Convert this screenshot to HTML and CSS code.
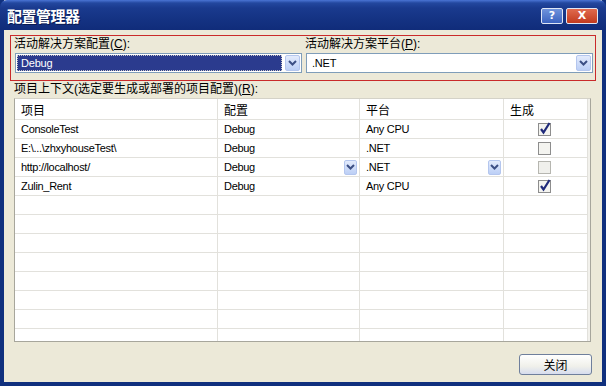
FILE: index.html
```html
<!DOCTYPE html>
<html lang="zh-CN">
<head>
    <meta charset="UTF-8">
    <title>配置管理器</title>
    <link rel="stylesheet" href="styles.css">
</head>
<body>
<div class="window">
    <div class="titlebar">
        <span class="title">配置管理器</span>
        <div class="tb-btns">
            <span class="tb-btn tb-help">?</span>
            <span class="tb-btn tb-close">X</span>
        </div>
    </div>

    <div class="client">
        <div class="active-box">
            <div class="field">
                <label>活动解决方案配置(<u>C</u>):</label>
                <div class="combo">
                    <span class="combo-text selected">Debug</span>
                    <span class="drop"><svg width="9" height="6" viewBox="0 0 9 6"><path d="M1 1 L4.5 4.5 L8 1" fill="none" stroke="#3c4f84" stroke-width="2"/></svg></span>
                </div>
            </div>
            <div class="field">
                <label>活动解决方案平台(<u>P</u>):</label>
                <div class="combo">
                    <span class="combo-text">.NET</span>
                    <span class="drop"><svg width="9" height="6" viewBox="0 0 9 6"><path d="M1 1 L4.5 4.5 L8 1" fill="none" stroke="#3c4f84" stroke-width="2"/></svg></span>
                </div>
            </div>
        </div>

        <div class="ctx-label">项目上下文(选定要生成或部署的项目配置)(<u>R</u>):</div>

        <div class="grid">
            <div class="row head">
                <div class="cell">项目</div>
                <div class="cell">配置</div>
                <div class="cell">平台</div>
                <div class="cell">生成</div>
            </div>
            <div class="row">
                <div class="cell">ConsoleTest</div>
                <div class="cell">Debug</div>
                <div class="cell">Any CPU</div>
                <div class="cell chk-cell"><svg width="14" height="15" viewBox="0 0 14 15"><rect x="0.5" y="1.5" width="12" height="12" fill="#f4f4f0" stroke="#8d8d8d"/><path d="M3 7 L5.5 10.5 L11.5 1" fill="none" stroke="#1f2a7a" stroke-width="2.2"/></svg></div>
            </div>
            <div class="row">
                <div class="cell">E:\...\zhxyhouseTest\</div>
                <div class="cell">Debug</div>
                <div class="cell">.NET</div>
                <div class="cell chk-cell"><svg width="14" height="15" viewBox="0 0 14 15"><rect x="0.5" y="1.5" width="12" height="12" fill="#f4f4f0" stroke="#8d8d8d"/></svg></div>
            </div>
            <div class="row">
                <div class="cell">http://localhost/</div>
                <div class="cell cell-combo">Debug<span class="mini-drop"><svg width="9" height="6" viewBox="0 0 9 6"><path d="M1 1 L4.5 4.5 L8 1" fill="none" stroke="#3c4f84" stroke-width="2"/></svg></span></div>
                <div class="cell cell-combo">.NET<span class="mini-drop"><svg width="9" height="6" viewBox="0 0 9 6"><path d="M1 1 L4.5 4.5 L8 1" fill="none" stroke="#3c4f84" stroke-width="2"/></svg></span></div>
                <div class="cell chk-cell"><svg width="14" height="15" viewBox="0 0 14 15"><rect x="0.5" y="1.5" width="12" height="12" fill="#f0f0ec" stroke="#b6b6b0"/></svg></div>
            </div>
            <div class="row">
                <div class="cell">Zulin_Rent</div>
                <div class="cell">Debug</div>
                <div class="cell">Any CPU</div>
                <div class="cell chk-cell"><svg width="14" height="15" viewBox="0 0 14 15"><rect x="0.5" y="1.5" width="12" height="12" fill="#f4f4f0" stroke="#8d8d8d"/><path d="M3 7 L5.5 10.5 L11.5 1" fill="none" stroke="#1f2a7a" stroke-width="2.2"/></svg></div>
            </div>
            <div class="row"><div class="cell"></div><div class="cell"></div><div class="cell"></div><div class="cell"></div></div>
            <div class="row"><div class="cell"></div><div class="cell"></div><div class="cell"></div><div class="cell"></div></div>
            <div class="row"><div class="cell"></div><div class="cell"></div><div class="cell"></div><div class="cell"></div></div>
            <div class="row"><div class="cell"></div><div class="cell"></div><div class="cell"></div><div class="cell"></div></div>
            <div class="row"><div class="cell"></div><div class="cell"></div><div class="cell"></div><div class="cell"></div></div>
            <div class="row"><div class="cell"></div><div class="cell"></div><div class="cell"></div><div class="cell"></div></div>
            <div class="row"><div class="cell"></div><div class="cell"></div><div class="cell"></div><div class="cell"></div></div>
            <div class="row"><div class="cell"></div><div class="cell"></div><div class="cell"></div><div class="cell"></div></div>
        </div>

        <div class="footer">
            <button class="btn">关闭</button>
        </div>
    </div>
</div>
</body>
</html>
```

FILE: styles.css
```css
body { margin: 0; background: #0f2a78; font-family: "Liberation Sans", "Noto Sans CJK SC", sans-serif; font-size: 12px; color: #000; }
.window { width: 606px; height: 386px; box-sizing: border-box; background: #ece9d8; border: 4px solid #10307e; border-top: none; display: flex; flex-direction: column; }

/* title bar */
.titlebar { height: 30px; margin: 0 -4px; padding: 0 8px 0 7px; display: flex; align-items: center; justify-content: space-between; border-radius: 7px 7px 0 0; background: linear-gradient(#4a74d4 0, #23479f 3px, #1a3a8e 8px, #143282 20px, #102c7a 30px); }
.title { color: #fff; font-family: "Noto Sans CJK SC", sans-serif; font-weight: bold; font-size: 15px; letter-spacing: -0.5px; text-shadow: 1px 1px 0 #0a1a50; }
.tb-btns { display: flex; gap: 3px; margin-top: 2px; }
.tb-btn { height: 14px; line-height: 14px; border: 1px solid #dfe6f5; border-radius: 2px; color: #fff; font-weight: bold; font-size: 11px; text-align: center; font-family: "DejaVu Sans", sans-serif; }
.tb-help { width: 20px; background: linear-gradient(#6f93dc, #3b63c0); }
.tb-close { width: 30px; background: linear-gradient(#e06a4e, #c23a1e); }

.client { flex: 1; padding: 5px 6px 0 6px; display: flex; flex-direction: column; }

/* active config box */
.active-box { border: 1px solid #c92a2a; height: 46px; box-sizing: border-box; padding: 1px 2px 0 4px; display: grid; grid-template-columns: 287px 287px; column-gap: 4px; }
.field label { display: block; height: 14px; line-height: 14px; margin: 0 0 2px -1px; }
.combo { height: 20px; box-sizing: border-box; border: 1px solid #7f9db9; background: #fff; display: flex; align-items: center; padding: 0 1px 0 1px; }
.combo-text { flex: 1; height: 16px; line-height: 16px; padding-left: 4px; font-size: 11px; letter-spacing: -0.2px; }
.combo-text.selected { background: #2b3b8e; color: #fff; outline: 1px dotted #c8c8c8; outline-offset: -1px; margin-right: 3px; }
.drop { width: 15px; height: 16px; box-sizing: border-box; border: 1px solid #b4c6ee; border-radius: 2px; background: linear-gradient(#e3ebfc, #bccff6); display: flex; align-items: center; justify-content: center; }

.ctx-label { height: 14px; line-height: 14px; margin: 1px 0 2px 4px; }

/* project grid */
.grid { margin-left: 4px; width: 577px; height: 244px; box-sizing: border-box; border: 1px solid #a7a69c; border-top-color: #d4d2c8; background: #f2f1ec; overflow: hidden; }
.row { display: grid; grid-template-columns: 203px 142px 144px 84px; height: 19px; }
.row.head { height: 21px; }
.cell { background: #fff; border-right: 1px solid #e2e1dc; border-bottom: 1px solid #e2e1dc; box-sizing: border-box; padding-left: 6px; display: flex; align-items: center; font-size: 11px; letter-spacing: -0.3px; white-space: nowrap; }
.row.head .cell { font-size: 12px; letter-spacing: 0; }
.cell-combo { justify-content: space-between; padding-right: 2px; }
.mini-drop { width: 13px; height: 15px; box-sizing: border-box; border: 1px solid #b4c6ee; border-radius: 2px; background: linear-gradient(#e3ebfc, #bccff6); display: flex; align-items: center; justify-content: center; }
.chk-cell { justify-content: center; padding-left: 0; padding-right: 2px; }

.footer { display: flex; justify-content: flex-end; padding: 12px 4px 0 0; }
.btn { width: 73px; height: 21px; padding: 0; border: 1px solid #6f7f9c; border-radius: 3px; background: linear-gradient(#ffffff, #f0f0ea 60%, #d6dcee); font-family: "Noto Sans CJK SC", sans-serif; font-size: 12px; color: #000; }
```
